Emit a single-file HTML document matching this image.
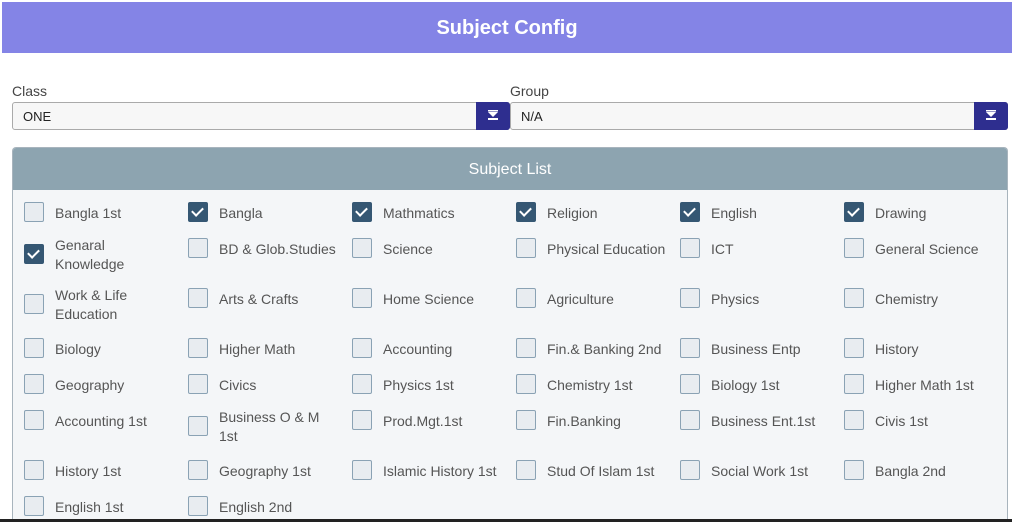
<!DOCTYPE html><html><head><style>
html,body{margin:0;width:1012px;height:522px;overflow:hidden}
body{background:#fff;font-family:"Liberation Sans",sans-serif;position:relative}
.hdr{position:absolute;left:2px;top:2px;width:1010px;height:51px;background:#8484e6;color:#fff;font-weight:bold;font-size:20px;text-align:center;line-height:53px}
.lbl{position:absolute;top:83px;font-size:14px;color:#444}
.sel{position:absolute;top:102px;height:28px;border:1px solid #aaa;border-radius:3px;background:#f7f7f7;box-sizing:border-box;font-size:13px;color:#222;line-height:27px;padding-left:10px}
.sel .b{position:absolute;right:-1px;top:-1px;width:34px;height:28px;background:#2e2e8f;border-radius:0 3px 3px 0}
.panel{position:absolute;left:12px;top:147px;width:996px;height:375px;border:1px solid #a8b4bd;border-bottom:none;border-radius:4px 4px 0 0;background:#f4f6f8;box-sizing:border-box;overflow:hidden}
.ph{height:42px;background:#8da4b0;color:#fff;font-size:16px;text-align:center;line-height:43px}
.cb{position:absolute;width:18px;height:18px;border:1px solid #8aa2b4;border-radius:2px;background:#e8ecf0}
.ck{background:#355773;border-color:#355773}
.ck:after{content:"";position:absolute;left:5px;top:2px;width:5px;height:9px;border:solid #fff;border-width:0 2px 2px 0;transform:rotate(45deg)}
.tx{position:absolute;font-size:14px;color:#555;line-height:19px;white-space:nowrap}
.bot{position:absolute;left:0;top:519px;width:1012px;height:3px;background:#222}
</style></head><body>
<div class="hdr">Subject Config</div>
<div class="lbl" style="left:12px">Class</div>
<div class="lbl" style="left:510px">Group</div>
<div class="sel" style="left:12px;width:498px">ONE<div class="b"><svg width="34" height="28"><path d="M12 10h10l-5 5z" fill="#fff"/><rect x="12" y="16" width="10" height="2" fill="#fff"/><rect x="12" y="8" width="10" height="1.5" fill="#fff"/></svg></div></div>
<div class="sel" style="left:510px;width:498px">N/A<div class="b"><svg width="34" height="28"><path d="M12 10h10l-5 5z" fill="#fff"/><rect x="12" y="16" width="10" height="2" fill="#fff"/><rect x="12" y="8" width="10" height="1.5" fill="#fff"/></svg></div></div>
<div class="panel"><div class="ph">Subject List</div></div>
<div id="g"></div>
<div class="bot"></div>
<script>
var rows=[[202,["Bangla 1st",0],["Bangla",1],["Mathmatics",1],["Religion",1],["English",1],["Drawing",1]],
[238,["Genaral<br>Knowledge",1],["BD &amp; Glob.Studies",0],["Science",0],["Physical Education",0],["ICT",0],["General Science",0]],
[288,["Work &amp; Life<br>Education",0],["Arts &amp; Crafts",0],["Home Science",0],["Agriculture",0],["Physics",0],["Chemistry",0]],
[338,["Biology",0],["Higher Math",0],["Accounting",0],["Fin.&amp; Banking 2nd",0],["Business Entp",0],["History",0]],
[374,["Geography",0],["Civics",0],["Physics 1st",0],["Chemistry 1st",0],["Biology 1st",0],["Higher Math 1st",0]],
[410,["Accounting 1st",0],["Business O &amp; M<br>1st",0],["Prod.Mgt.1st",0],["Fin.Banking",0],["Business Ent.1st",0],["Civis 1st",0]],
[460,["History 1st",0],["Geography 1st",0],["Islamic History 1st",0],["Stud Of Islam 1st",0],["Social Work 1st",0],["Bangla 2nd",0]],
[496,["English 1st",0],["English 2nd",0]]];
var h="";rows.forEach(function(r){var y=r[0];for(var i=1;i<r.length;i++){var t=r[i];var two=t[0].indexOf("<br>")>0;var x=24+(i-1)*164;
var by=two?y+6:y, ty=two?y-2:y+2;
h+='<div class="cb'+(t[1]?' ck':'')+'" style="left:'+x+'px;top:'+by+'px"></div><div class="tx" style="left:'+(x+31)+'px;top:'+ty+'px">'+t[0]+'</div>';}});
document.getElementById("g").innerHTML=h;
</script>
</body></html>
